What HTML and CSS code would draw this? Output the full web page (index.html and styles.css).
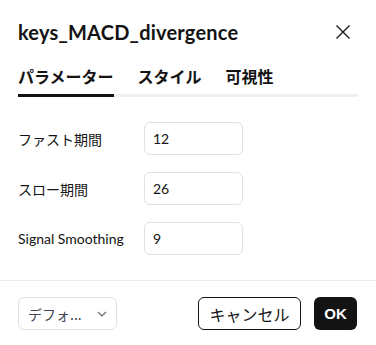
FILE: index.html
```html
<!DOCTYPE html>
<html lang="ja">
<head>
<meta charset="utf-8">
<link rel="stylesheet" href="styles.css">
</head>
<body>
<div class="dialog">
  <div class="header">
    <div class="title">keys_MACD_divergence</div>
    <button class="close" aria-label="close">
      <svg width="16" height="16" viewBox="0 0 16 16"><path d="M1.5 1.5 L14.5 14.5 M14.5 1.5 L1.5 14.5" stroke="#131313" stroke-width="1.3" fill="none"/></svg>
    </button>
  </div>
  <div class="tabs">
    <div class="tab active">パラメーター</div>
    <div class="tab">スタイル</div>
    <div class="tab">可視性</div>
  </div>
  <div class="fields">
    <div class="label">ファスト期間</div>
    <div class="input">12</div>
    <div class="label">スロー期間</div>
    <div class="input">26</div>
    <div class="label">Signal Smoothing</div>
    <div class="input">9</div>
  </div>
  <div class="footer">
    <div class="select">
      <span class="select-text">デフォ...</span>
      <svg width="12" height="8" viewBox="0 0 12 8"><path d="M2 2 L6 6 L10 2" stroke="#6a6d78" stroke-width="1.2" fill="none"/></svg>
    </div>
    <div class="actions">
      <button class="btn cancel">キャンセル</button>
      <button class="btn ok">OK</button>
    </div>
  </div>
</div>
</body>
</html>
```
FILE: styles.css
```css
* { box-sizing: border-box; }
body {
  margin: 0;
  background: #fff;
  font-family: "Lato", "Noto Sans CJK JP", sans-serif;
  color: #131313;
}
.dialog {
  width: 376px;
  height: 345px;
  display: flex;
  flex-direction: column;
}
.header {
  display: flex;
  align-items: center;
  justify-content: space-between;
  padding: 18px 25px 0 18px;
  height: 46px;
}
.title {
  font-size: 20px;
  font-weight: 700;
  line-height: 28px;
  letter-spacing: 0.2px;
}
.close {
  border: 0;
  background: none;
  padding: 0;
  width: 16px;
  height: 16px;
  display: flex;
}
.tabs {
  margin: 18px 18px 0 18px;
  display: flex;
  gap: 24px;
  border-bottom: 3px solid #f0f0f0;
}
.tab {
  font-family: "Noto Sans CJK JP", sans-serif;
  font-size: 16px;
  font-weight: 700;
  line-height: 24px;
  padding-bottom: 6px;
  margin-bottom: -3px;
  border-bottom: 3px solid transparent;
}
.tab.active {
  border-bottom-color: #131313;
}
.fields {
  display: grid;
  grid-template-columns: 126px 99px;
  row-gap: 17px;
  padding: 25px 18px 0 18px;
  align-items: center;
}
.label {
  font-family: "Lato", "Noto Sans CJK JP", sans-serif;
  font-size: 14px;
  color: #131313;
}
.input {
  height: 33px;
  border: 1px solid #e0e0e0;
  border-radius: 6px;
  padding: 0 8px;
  display: flex;
  align-items: center;
  font-size: 14px;
}
.footer {
  margin-top: 25px;
  border-top: 1px solid #ececec;
  padding: 16px 19px 0 18px;
  display: flex;
  justify-content: space-between;
  align-items: center;
}
.select {
  width: 99px;
  height: 33px;
  border: 1px solid #e0e0e0;
  border-radius: 6px;
  display: flex;
  align-items: center;
  justify-content: space-between;
  padding: 0 8px 0 9px;
}
.select-text {
  font-family: "Noto Sans CJK JP", sans-serif;
  font-size: 14px;
  color: #434651;
}
.actions {
  display: flex;
  gap: 13px;
}
.btn {
  height: 33px;
  border-radius: 6px;
  font-size: 16px;
  font-family: "Noto Sans CJK JP", sans-serif;
  padding: 0;
}
.cancel {
  width: 103px;
  background: #fff;
  border: 1px solid #131313;
  color: #131313;
}
.ok {
  width: 43px;
  background: #131313;
  border: 0;
  color: #fff;
  font-family: "Liberation Sans", sans-serif;
  font-weight: 700;
  font-size: 15px;
}
```
